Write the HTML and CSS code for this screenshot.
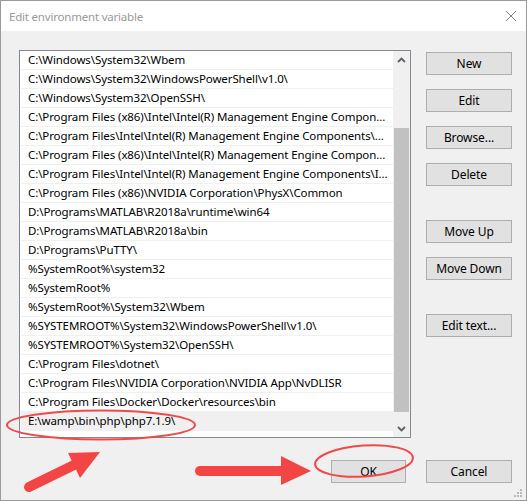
FILE: index.html
```html
<!DOCTYPE html>
<html lang="en">

<head>
  <meta charset="UTF-8">
  <link rel="stylesheet" href="styles.css">
</head>

<body>
  <div class="window">
    <div class="titlebar">
      <span class="title">Edit environment variable</span>
      <svg class="close" width="12" height="12" viewBox="0 0 12 12">
        <path d="M1 1 L11 11 M11 1 L1 11" stroke="#8a8a8a" stroke-width="1" fill="none" />
      </svg>
    </div>

    <div class="content">
      <div class="main">
        <div class="list">
          <div class="rows">
            <div class="row">C:\Windows\System32\Wbem</div>
            <div class="row">C:\Windows\System32\WindowsPowerShell\v1.0\</div>
            <div class="row">C:\Windows\System32\OpenSSH\</div>
            <div class="row">C:\Program Files (x86)\Intel\Intel(R) Management Engine Compon...</div>
            <div class="row">C:\Program Files\Intel\Intel(R) Management Engine Components\...</div>
            <div class="row">C:\Program Files (x86)\Intel\Intel(R) Management Engine Compon...</div>
            <div class="row">C:\Program Files\Intel\Intel(R) Management Engine Components\I...</div>
            <div class="row">C:\Program Files (x86)\NVIDIA Corporation\PhysX\Common</div>
            <div class="row">D:\Programs\MATLAB\R2018a\runtime\win64</div>
            <div class="row">D:\Programs\MATLAB\R2018a\bin</div>
            <div class="row">D:\Programs\PuTTY\</div>
            <div class="row">%SystemRoot%\system32</div>
            <div class="row">%SystemRoot%</div>
            <div class="row">%SystemRoot%\System32\Wbem</div>
            <div class="row">%SYSTEMROOT%\System32\WindowsPowerShell\v1.0\</div>
            <div class="row">%SYSTEMROOT%\System32\OpenSSH\</div>
            <div class="row">C:\Program Files\dotnet\</div>
            <div class="row">C:\Program Files\NVIDIA Corporation\NVIDIA App\NvDLISR</div>
            <div class="row">C:\Program Files\Docker\Docker\resources\bin</div>
            <div class="row selected">E:\wamp\bin\php\php7.1.9\</div>
          </div>
          <div class="scrollbar">
            <div class="scroll-btn">
              <svg width="9" height="6" viewBox="0 0 9 6">
                <path d="M1 5 L4.5 1.5 L8 5" stroke="#606060" stroke-width="1.8" fill="none" />
              </svg>
            </div>
            <div class="track">
              <div class="thumb"></div>
            </div>
            <div class="scroll-btn">
              <svg width="9" height="6" viewBox="0 0 9 6">
                <path d="M1 1 L4.5 4.5 L8 1" stroke="#606060" stroke-width="1.8" fill="none" />
              </svg>
            </div>
          </div>
        </div>

        <div class="side">
          <button>New</button>
          <button>Edit</button>
          <button>Browse...</button>
          <button>Delete</button>
          <button class="group">Move Up</button>
          <button>Move Down</button>
          <button class="group">Edit text...</button>
        </div>
      </div>

      <div class="footer">
        <button class="ok">OK</button>
        <button>Cancel</button>
      </div>
    </div>

    <svg class="grip" width="10" height="10" viewBox="0 0 10 10">
      <rect x="7" y="1" width="2" height="2" />
      <rect x="4" y="4" width="2" height="2" />
      <rect x="7" y="4" width="2" height="2" />
      <rect x="1" y="7" width="2" height="2" />
      <rect x="4" y="7" width="2" height="2" />
      <rect x="7" y="7" width="2" height="2" />
    </svg>

    <!-- red markup drawn on top of the screenshot -->
    <svg class="marks" width="527" height="501" viewBox="0 0 527 501">
      <ellipse cx="101" cy="425" rx="94" ry="14.5" />
      <ellipse cx="364" cy="461" rx="49" ry="15.5" transform="rotate(-4 364 461)" />
      <line class="shaft" x1="29" y1="487" x2="74" y2="465" />
      <polygon points="100,452 68,453 80,478" />
      <line class="shaft" x1="200" y1="471" x2="282" y2="471" />
      <polygon points="311,471 281,456 281,485" />
    </svg>
  </div>
</body>

</html>
```

FILE: styles.css
```css
body {
  margin: 0;
  padding: 0;
  background: #fff;
  font-family: 'Noto Sans', 'Open Sans', sans-serif;
  font-size: 12px;
  color: #000;
}

.window {
  position: relative;
  width: 527px;
  height: 501px;
  box-sizing: border-box;
  border: 1px solid #9a9a9a;
  background: #f0f0f0;
}

.titlebar {
  height: 30px;
  background: #fff;
  display: flex;
  align-items: center;
  justify-content: space-between;
  padding: 0 9px 0 8px;
}

.title {
  color: #999;
  font-size: 11.5px;
  letter-spacing: -0.2px;
}

.close {
  display: block;
}

.content {
  padding: 19px 14px 0 18px;
}

.main {
  display: flex;
  gap: 15px;
}

.list {
  width: 392px;
  height: 388px;
  box-sizing: border-box;
  border: 1px solid #828790;
  background: #fff;
  display: flex;
}

.rows {
  flex: 1;
  min-width: 0;
  padding-left: 1px;
}

.row {
  height: 18px;
  line-height: 18px;
  border-bottom: 1px solid #f0f0f0;
  padding-left: 7px;
  font-size: 11.5px;
  letter-spacing: -0.1px;
  white-space: nowrap;
  overflow: hidden;
}

.row.selected {
  background: #f0f0f0;
}

.scrollbar {
  width: 17px;
  background: #f0f0f0;
  display: flex;
  flex-direction: column;
}

.scroll-btn {
  height: 17px;
  display: flex;
  align-items: center;
  justify-content: center;
}

.track {
  flex: 1;
  padding: 60px 1px 0;
}

.thumb {
  height: 284px;
  background: #c1c1c1;
}

.side {
  width: 86px;
  display: flex;
  flex-direction: column;
  gap: 14px;
  padding-top: 2px;
}

button {
  height: 23px;
  padding: 0;
  background: #e1e1e1;
  border: 1px solid #adadad;
  border-radius: 0;
  font-family: inherit;
  font-size: 12px;
  letter-spacing: -0.1px;
  color: #000;
}

.side .group {
  margin-top: 20px;
}

.footer {
  display: flex;
  justify-content: flex-end;
  gap: 20px;
  margin-top: 22px;
}

.footer button {
  width: 86px;
}

.footer .ok {
  width: 75px;
}

.grip {
  position: absolute;
  right: 3px;
  bottom: 2px;
  fill: #b9b9b9;
}

.marks {
  position: absolute;
  left: -1px;
  top: -1px;
  pointer-events: none;
}

.marks ellipse {
  fill: none;
  stroke: #ef4a4a;
  stroke-width: 2;
}

.marks .shaft {
  stroke: #f44545;
  stroke-width: 10;
  stroke-linecap: round;
}

.marks polygon {
  fill: #f44545;
}
```
